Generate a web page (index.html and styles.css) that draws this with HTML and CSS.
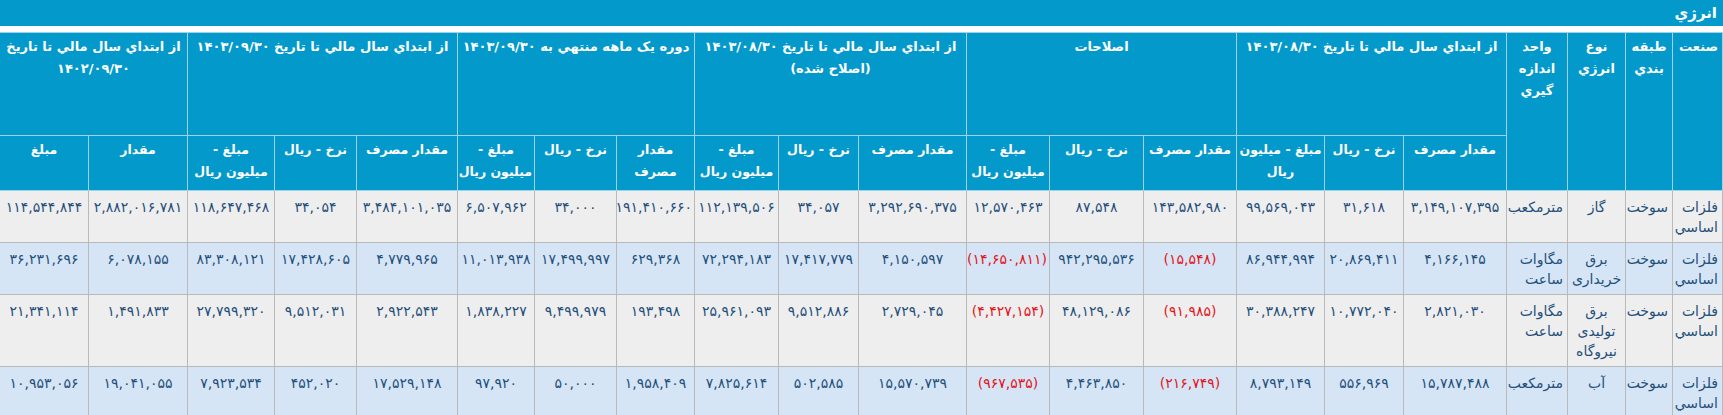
FILE: index.html
```html
<!DOCTYPE html>
<html lang="fa" dir="rtl">
<head>
<meta charset="utf-8">
<title>انرژي</title>
<link rel="stylesheet" href="styles.css">
</head>
<body>
<div class="title-bar">انرژي</div>
<table class="energy">
  <colgroup>
    <col class="w50"><col class="w47"><col class="w58"><col class="w61">
    <col class="w103"><col class="w79"><col class="w88">
    <col class="w93"><col class="w94"><col class="w83">
    <col class="w108"><col class="w80"><col class="w84">
    <col class="w78"><col class="w82"><col class="w77">
    <col class="w101"><col class="w82"><col class="w87">
    <col class="w99"><col class="w89">
  </colgroup>
  <thead>
    <tr class="h-top">
      <th rowspan="2" class="first">صنعت</th>
      <th rowspan="2">طبقه<br>بندي</th>
      <th rowspan="2">نوع<br>انرژي</th>
      <th rowspan="2">واحد<br>اندازه<br>گيري</th>
      <th colspan="3">از ابتداي سال مالي تا تاريخ ۱۴۰۳/۰۸/۳۰</th>
      <th colspan="3">اصلاحات</th>
      <th colspan="3">از ابتداي سال مالي تا تاريخ ۱۴۰۳/۰۸/۳۰<br>(اصلاح شده)</th>
      <th colspan="3">دوره يک ماهه منتهي به ۱۴۰۳/۰۹/۳۰</th>
      <th colspan="3">از ابتداي سال مالي تا تاريخ ۱۴۰۳/۰۹/۳۰</th>
      <th colspan="2">از ابتداي سال مالي تا تاريخ<br>۱۴۰۲/۰۹/۳۰</th>
    </tr>
    <tr class="h-sub">
      <th>مقدار مصرف</th><th>نرخ - ريال</th><th>مبلغ - ميليون<br>ريال</th>
      <th>مقدار مصرف</th><th>نرخ - ريال</th><th>مبلغ -<br>ميليون ريال</th>
      <th>مقدار مصرف</th><th>نرخ - ريال</th><th>مبلغ -<br>ميليون ريال</th>
      <th>مقدار<br>مصرف</th><th>نرخ - ريال</th><th>مبلغ -<br>ميليون ريال</th>
      <th>مقدار مصرف</th><th>نرخ - ريال</th><th>مبلغ -<br>ميليون ريال</th>
      <th>مقدار</th><th>مبلغ</th>
    </tr>
  </thead>
  <tbody>
    <tr class="odd">
      <td class="txt">فلزات اساسي</td><td class="txt">سوخت</td><td class="kind">گاز</td><td class="txt">مترمکعب</td>
      <td>۳,۱۴۹,۱۰۷,۳۹۵</td><td>۳۱,۶۱۸</td><td>۹۹,۵۶۹,۰۴۳</td>
      <td>۱۴۳,۵۸۲,۹۸۰</td><td>۸۷,۵۴۸</td><td>۱۲,۵۷۰,۴۶۳</td>
      <td>۳,۲۹۲,۶۹۰,۳۷۵</td><td>۳۴,۰۵۷</td><td>۱۱۲,۱۳۹,۵۰۶</td>
      <td>۱۹۱,۴۱۰,۶۶۰</td><td>۳۴,۰۰۰</td><td>۶,۵۰۷,۹۶۲</td>
      <td>۳,۴۸۴,۱۰۱,۰۳۵</td><td>۳۴,۰۵۴</td><td>۱۱۸,۶۴۷,۴۶۸</td>
      <td>۲,۸۸۲,۰۱۶,۷۸۱</td><td>۱۱۴,۵۴۴,۸۴۴</td>
    </tr>
    <tr class="even">
      <td class="txt">فلزات اساسي</td><td class="txt">سوخت</td><td class="kind">برق خريداری</td><td class="txt">مگاوات ساعت</td>
      <td>۴,۱۶۶,۱۴۵</td><td>۲۰,۸۶۹,۴۱۱</td><td>۸۶,۹۴۴,۹۹۴</td>
      <td class="neg">(۱۵,۵۴۸)</td><td>۹۴۲,۲۹۵,۵۳۶</td><td class="neg">(۱۴,۶۵۰,۸۱۱)</td>
      <td>۴,۱۵۰,۵۹۷</td><td>۱۷,۴۱۷,۷۷۹</td><td>۷۲,۲۹۴,۱۸۳</td>
      <td>۶۲۹,۳۶۸</td><td>۱۷,۴۹۹,۹۹۷</td><td>۱۱,۰۱۳,۹۳۸</td>
      <td>۴,۷۷۹,۹۶۵</td><td>۱۷,۴۲۸,۶۰۵</td><td>۸۳,۳۰۸,۱۲۱</td>
      <td>۶,۰۷۸,۱۵۵</td><td>۳۶,۲۳۱,۶۹۶</td>
    </tr>
    <tr class="odd">
      <td class="txt">فلزات اساسي</td><td class="txt">سوخت</td><td class="kind">برق توليدی نيروگاه</td><td class="txt">مگاوات ساعت</td>
      <td>۲,۸۲۱,۰۳۰</td><td>۱۰,۷۷۲,۰۴۰</td><td>۳۰,۳۸۸,۲۴۷</td>
      <td class="neg">(۹۱,۹۸۵)</td><td>۴۸,۱۲۹,۰۸۶</td><td class="neg">(۴,۴۲۷,۱۵۴)</td>
      <td>۲,۷۲۹,۰۴۵</td><td>۹,۵۱۲,۸۸۶</td><td>۲۵,۹۶۱,۰۹۳</td>
      <td>۱۹۳,۴۹۸</td><td>۹,۴۹۹,۹۷۹</td><td>۱,۸۳۸,۲۲۷</td>
      <td>۲,۹۲۲,۵۴۳</td><td>۹,۵۱۲,۰۳۱</td><td>۲۷,۷۹۹,۳۲۰</td>
      <td>۱,۴۹۱,۸۳۳</td><td>۲۱,۳۴۱,۱۱۴</td>
    </tr>
    <tr class="even">
      <td class="txt">فلزات اساسي</td><td class="txt">سوخت</td><td class="kind">آب</td><td class="txt">مترمکعب</td>
      <td>۱۵,۷۸۷,۴۸۸</td><td>۵۵۶,۹۶۹</td><td>۸,۷۹۳,۱۴۹</td>
      <td class="neg">(۲۱۶,۷۴۹)</td><td>۴,۴۶۳,۸۵۰</td><td class="neg">(۹۶۷,۵۳۵)</td>
      <td>۱۵,۵۷۰,۷۳۹</td><td>۵۰۲,۵۸۵</td><td>۷,۸۲۵,۶۱۴</td>
      <td>۱,۹۵۸,۴۰۹</td><td>۵۰,۰۰۰</td><td>۹۷,۹۲۰</td>
      <td>۱۷,۵۲۹,۱۴۸</td><td>۴۵۲,۰۲۰</td><td>۷,۹۲۳,۵۳۴</td>
      <td>۱۹,۰۴۱,۰۵۵</td><td>۱۰,۹۵۳,۰۵۶</td>
    </tr>
  </tbody>
</table>
</body>
</html>
```

FILE: styles.css
```css
html, body {
  margin: 0;
  padding: 0;
  background: #ffffff;
}

body {
  font-family: "DejaVu Sans", "Noto Sans", sans-serif;
  direction: rtl;
}

.title-bar {
  height: 26px;
  line-height: 26px;
  background: #0399cb;
  color: #ffffff;
  font-weight: bold;
  font-size: 15px;
  padding: 0 6px;
  margin-bottom: 6px;
}

.energy {
  width: 1723px;
  table-layout: fixed;
  border-collapse: collapse;
  direction: rtl;
}

.w50 { width: 50px; }
.w47 { width: 47px; }
.w58 { width: 58px; }
.w61 { width: 61px; }
.w103 { width: 103px; }
.w79 { width: 79px; }
.w88 { width: 88px; }
.w93 { width: 93px; }
.w94 { width: 94px; }
.w83 { width: 83px; }
.w108 { width: 108px; }
.w80 { width: 80px; }
.w84 { width: 84px; }
.w78 { width: 78px; }
.w82 { width: 82px; }
.w77 { width: 77px; }
.w101 { width: 101px; }
.w87 { width: 87px; }
.w99 { width: 99px; }
.w89 { width: 89px; }

.energy th {
  background: #0399cb;
  color: #ffffff;
  font-weight: bold;
  font-size: 13px;
  line-height: 22px;
  vertical-align: top;
  text-align: center;
  white-space: nowrap;
  padding: 3px 2px;
  border: 1px solid #9fd3ea;
}

.h-sub th {
  font-size: 12.5px;
}

.energy th.first {
  text-align: right;
  padding-right: 4px;
}

.h-top {
  height: 103px;
}

.h-sub {
  height: 55px;
}

.energy td {
  font-size: 14px;
  line-height: 20px;
  color: #1f4f7b;
  text-align: center;
  vertical-align: top;
  padding: 6px 2px 5px;
  border: 1px solid #b9b9b9;
  white-space: nowrap;
}

.energy td.txt {
  text-align: right;
  white-space: normal;
  padding-right: 4px;
}

.energy td.kind {
  text-align: center;
  white-space: normal;
}

.energy td.neg {
  color: #e3141b;
}

.odd td {
  background: #eeeeee;
}

.even td {
  background: #d5e5f5;
}
```
